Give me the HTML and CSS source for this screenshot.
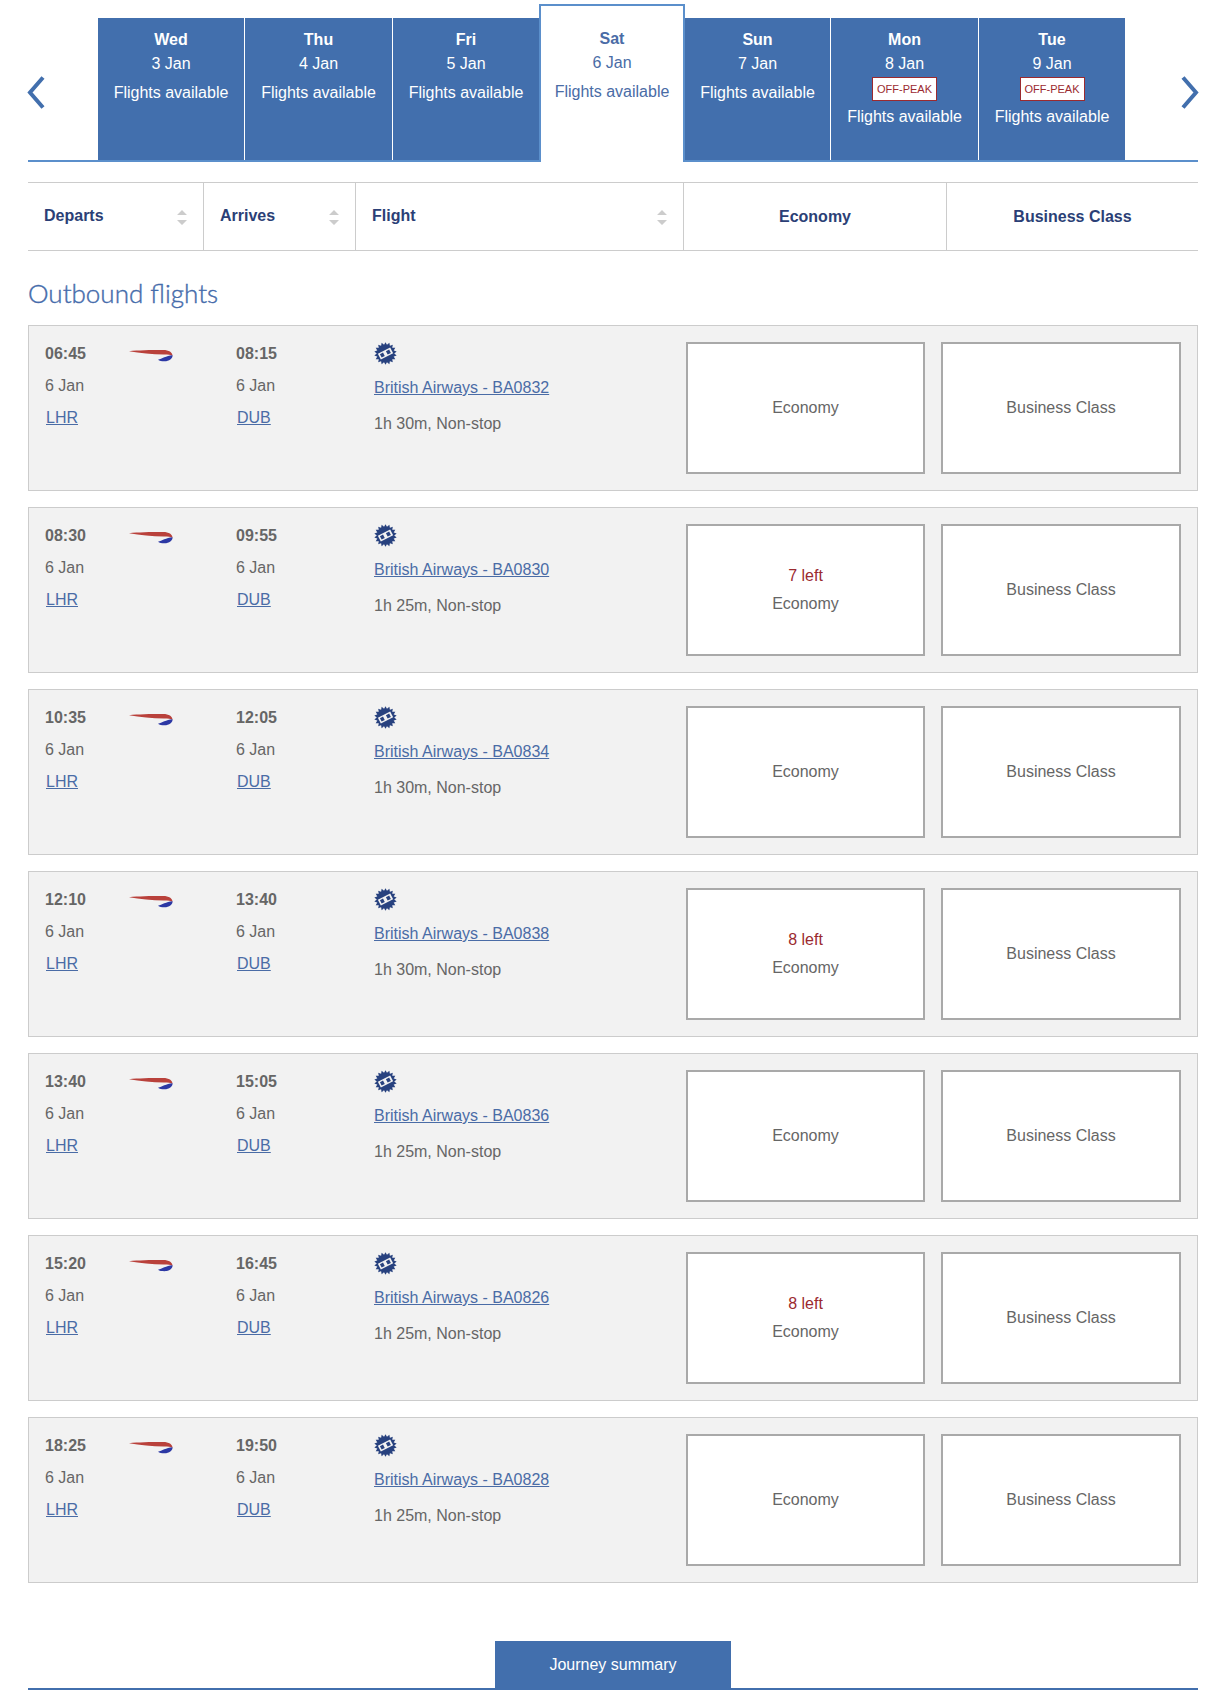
FILE: index.html
```html
<!DOCTYPE html>
<html lang="en">
<head>
    <meta charset="UTF-8">
    <meta name="viewport" content="width=device-width, initial-scale=1.0">
    <title>Select outbound flight</title>
    <link rel="stylesheet" href="styles.css">
</head>
<body>
    <!-- shared icons -->
    <svg class="icon-defs" width="0" height="0">
        <symbol id="icon-ba" viewBox="0 0 46 14">
            <path d="M1 3.200C10 2.200 22 2 35 2C41 2 44.500 4.300 44.500 7.800C43 6.500 40 6.400 36 6.400C24 6.400 12 5.200 1 3.200Z" fill="#b9413b"/>
            <path d="M44.500 7.200C45 10.500 41 13.200 36.500 13.200C33.500 13.200 31.500 12.700 30 11.700C34 10.500 38 8 44.500 7.200Z" fill="#2c38a4"/>
        </symbol>
        <symbol id="icon-award" viewBox="0 0 24 24">
            <!-- 18 point star made of six turned triangles -->
            <g fill="#28427f">
                <path d="M12 0.200L22.220 17.900H1.780Z"/>
                <path d="M12 0.200L22.220 17.900H1.780Z" transform="rotate(20 12 12)"/>
                <path d="M12 0.200L22.220 17.900H1.780Z" transform="rotate(40 12 12)"/>
                <path d="M12 0.200L22.220 17.900H1.780Z" transform="rotate(60 12 12)"/>
                <path d="M12 0.200L22.220 17.900H1.780Z" transform="rotate(80 12 12)"/>
                <path d="M12 0.200L22.220 17.900H1.780Z" transform="rotate(100 12 12)"/>
            </g>
            <g transform="rotate(-27 12 12)">
                <rect x="4.800" y="8.600" width="14.400" height="6.800" fill="#f2f2f2"/>
                <rect x="6.500" y="10" width="3.600" height="4" fill="#28427f"/>
                <rect x="13.500" y="10" width="3.800" height="4" fill="#28427f"/>
            </g>
        </symbol>
        <symbol id="icon-sort" viewBox="0 0 10 15">
            <path d="M0 5L5 0L10 5ZM0 10L5 15L10 10Z" fill="#ccc"/>
        </symbol>
    </svg>

    <div class="container">
        <div class="date-bar">
            <a class="arrow prev"><svg width="18" height="34" viewBox="0 0 18 34"><path d="M16 1.500L3 16.500L16 31.500" fill="none" stroke="#426fad" stroke-width="4"/></svg></a>
            <ul class="dates">
                <li><strong>Wed</strong><span>3 Jan</span><span class="status">Flights available</span></li>
                <li><strong>Thu</strong><span>4 Jan</span><span class="status">Flights available</span></li>
                <li><strong>Fri</strong><span>5 Jan</span><span class="status">Flights available</span></li>
                <li class="active"><strong>Sat</strong><span>6 Jan</span><span class="status">Flights available</span></li>
                <li><strong>Sun</strong><span>7 Jan</span><span class="status">Flights available</span></li>
                <li><strong>Mon</strong><span>8 Jan</span><span class="off-peak">OFF-PEAK</span><span>Flights available</span></li>
                <li><strong>Tue</strong><span>9 Jan</span><span class="off-peak">OFF-PEAK</span><span>Flights available</span></li>
            </ul>
            <a class="arrow next"><svg width="18" height="34" viewBox="0 0 18 34"><path d="M2 1.500L15 16.500L2 31.500" fill="none" stroke="#426fad" stroke-width="4"/></svg></a>
        </div>

        <div class="table-head">
            <div class="sortable">Departs <svg class="sort"><use href="#icon-sort"/></svg></div>
            <div class="sortable">Arrives <svg class="sort"><use href="#icon-sort"/></svg></div>
            <div class="sortable">Flight <svg class="sort"><use href="#icon-sort"/></svg></div>
            <div class="cabin-head">Economy</div>
            <div class="cabin-head">Business Class</div>
        </div>

        <h2>Outbound flights</h2>

        <div class="flight">
            <div class="stop"><strong>06:45</strong><span>6 Jan</span><a>LHR</a></div>
            <svg class="airline"><use href="#icon-ba"/></svg>
            <div class="stop"><strong>08:15</strong><span>6 Jan</span><a>DUB</a></div>
            <div class="details"><svg class="award"><use href="#icon-award"/></svg><a>British Airways - BA0832</a><span>1h 30m, Non-stop</span></div>
            <div class="cabin">Economy</div>
            <div class="cabin">Business Class</div>
        </div>

        <div class="flight">
            <div class="stop"><strong>08:30</strong><span>6 Jan</span><a>LHR</a></div>
            <svg class="airline"><use href="#icon-ba"/></svg>
            <div class="stop"><strong>09:55</strong><span>6 Jan</span><a>DUB</a></div>
            <div class="details"><svg class="award"><use href="#icon-award"/></svg><a>British Airways - BA0830</a><span>1h 25m, Non-stop</span></div>
            <div class="cabin"><span class="left">7 left</span>Economy</div>
            <div class="cabin">Business Class</div>
        </div>

        <div class="flight">
            <div class="stop"><strong>10:35</strong><span>6 Jan</span><a>LHR</a></div>
            <svg class="airline"><use href="#icon-ba"/></svg>
            <div class="stop"><strong>12:05</strong><span>6 Jan</span><a>DUB</a></div>
            <div class="details"><svg class="award"><use href="#icon-award"/></svg><a>British Airways - BA0834</a><span>1h 30m, Non-stop</span></div>
            <div class="cabin">Economy</div>
            <div class="cabin">Business Class</div>
        </div>

        <div class="flight">
            <div class="stop"><strong>12:10</strong><span>6 Jan</span><a>LHR</a></div>
            <svg class="airline"><use href="#icon-ba"/></svg>
            <div class="stop"><strong>13:40</strong><span>6 Jan</span><a>DUB</a></div>
            <div class="details"><svg class="award"><use href="#icon-award"/></svg><a>British Airways - BA0838</a><span>1h 30m, Non-stop</span></div>
            <div class="cabin"><span class="left">8 left</span>Economy</div>
            <div class="cabin">Business Class</div>
        </div>

        <div class="flight">
            <div class="stop"><strong>13:40</strong><span>6 Jan</span><a>LHR</a></div>
            <svg class="airline"><use href="#icon-ba"/></svg>
            <div class="stop"><strong>15:05</strong><span>6 Jan</span><a>DUB</a></div>
            <div class="details"><svg class="award"><use href="#icon-award"/></svg><a>British Airways - BA0836</a><span>1h 25m, Non-stop</span></div>
            <div class="cabin">Economy</div>
            <div class="cabin">Business Class</div>
        </div>

        <div class="flight">
            <div class="stop"><strong>15:20</strong><span>6 Jan</span><a>LHR</a></div>
            <svg class="airline"><use href="#icon-ba"/></svg>
            <div class="stop"><strong>16:45</strong><span>6 Jan</span><a>DUB</a></div>
            <div class="details"><svg class="award"><use href="#icon-award"/></svg><a>British Airways - BA0826</a><span>1h 25m, Non-stop</span></div>
            <div class="cabin"><span class="left">8 left</span>Economy</div>
            <div class="cabin">Business Class</div>
        </div>

        <div class="flight">
            <div class="stop"><strong>18:25</strong><span>6 Jan</span><a>LHR</a></div>
            <svg class="airline"><use href="#icon-ba"/></svg>
            <div class="stop"><strong>19:50</strong><span>6 Jan</span><a>DUB</a></div>
            <div class="details"><svg class="award"><use href="#icon-award"/></svg><a>British Airways - BA0828</a><span>1h 25m, Non-stop</span></div>
            <div class="cabin">Economy</div>
            <div class="cabin">Business Class</div>
        </div>

        <div class="summary">
            <button type="button">Journey summary</button>
        </div>
    </div>
</body>
</html>
```
FILE: styles.css
```css
* {
    margin: 0;
    padding: 0;
    box-sizing: border-box;
}

body {
    background: #fff;
    color: #666;
    font-family: Arial, "Liberation Sans", sans-serif;
    font-size: 16px;
    line-height: 24px;
}

.icon-defs {
    display: block;
}

.container {
    width: 1170px;
    margin: 0 27px 0 28px;
    padding-top: 4px;
}

/* date tabs */
.date-bar {
    display: flex;
    justify-content: space-between;
    height: 158px;
    border-bottom: 2px solid #5b8fcb;
}

.arrow {
    width: 70px;
    padding-top: 72px;
}

.arrow svg {
    display: block;
    margin-left: -1px;
}

.arrow.next svg {
    margin-left: 56px;
}

.next {
    width: 73px;
}

.dates {
    display: grid;
    grid-template-columns: 147px 148px 146px 146px 146px 148px 146px;
    grid-template-rows: 156px;
    height: 156px;
    list-style: none;
    text-align: center;
}

.dates li {
    display: flex;
    flex-direction: column;
    margin-top: 14px;
    padding-top: 10px;
    background: #426fad;
    border-right: 1px solid #fff;
    color: #fff;
}

.dates li:nth-child(3),
.dates li:last-child {
    border-right: none;
}

.dates .active {
    height: 158px;
    margin-top: 0;
    padding-top: 21px;
    background: #fff;
    border: 2px solid #5b8fcb;
    border-bottom: none;
    color: #4a6ca6;
}

.status {
    margin-top: 5px;
}

.off-peak {
    align-self: center;
    width: 65px;
    height: 24px;
    margin: 1px 0 4px;
    background: #fff;
    border: 1px solid #9b2a2f;
    color: #9b2a2f;
    font-size: 11px;
    line-height: 23px;
}

/* column headings */
.table-head {
    display: grid;
    grid-template-columns: 176px 152px 328px 263px 251px;
    height: 69px;
    margin-top: 20px;
    border-top: 1px solid #ccc;
    border-bottom: 1px solid #ccc;
    color: #2b3f76;
    font-weight: bold;
}

.table-head div {
    border-right: 1px solid #ccc;
}

.table-head div:last-child {
    border-right: none;
}

.sortable {
    display: flex;
    justify-content: space-between;
    padding: 21px 16px 0;
}

.sort {
    width: 10px;
    height: 15px;
    margin-top: 6px;
}

.cabin-head {
    padding-top: 22px;
    text-align: center;
}

h2 {
    height: 74px;
    padding-top: 24px;
    color: #466cab;
    font-family: Lato, sans-serif;
    font-size: 26px;
    font-weight: 300;
    line-height: 36px;
    -webkit-text-stroke: 0.4px #466cab;
}

/* flight rows */
.flight {
    display: grid;
    grid-template-columns: 84px 107px 138px 312px 239px 240px;
    height: 166px;
    margin-bottom: 16px;
    padding: 0 16px;
    background: #f2f2f2;
    border: 1px solid #ccc;
}

.flight a {
    color: #4a6ca6;
    text-decoration: underline;
}

.stop {
    display: flex;
    flex-direction: column;
    align-items: flex-start;
    padding-top: 12px;
    line-height: 32px;
}

.stop a {
    margin-left: 1px;
}

.airline {
    width: 46px;
    height: 14px;
    margin-top: 22px;
    margin-left: -1px;
}

.details {
    display: flex;
    flex-direction: column;
    align-items: flex-start;
    padding-top: 16px;
}

.award {
    width: 23px;
    height: 23px;
    margin-bottom: 11px;
}

.details a {
    margin-bottom: 12px;
}

.cabin {
    display: flex;
    flex-direction: column;
    align-items: center;
    justify-content: center;
    height: 132px;
    margin-top: 16px;
    background: #fff;
    border: 2px solid #a9a9a9;
    line-height: 28px;
}

.cabin:last-child {
    margin-left: 16px;
    margin-right: -16px;
}

.left {
    color: #9b2a2f;
}

.summary {
    display: flex;
    justify-content: center;
    margin-top: 58px;
    border-bottom: 2px solid #426fad;
}

button {
    width: 236px;
    height: 47px;
    background: #426fad;
    border: none;
    color: #fff;
    font-family: inherit;
    font-size: 16px;
}
```
